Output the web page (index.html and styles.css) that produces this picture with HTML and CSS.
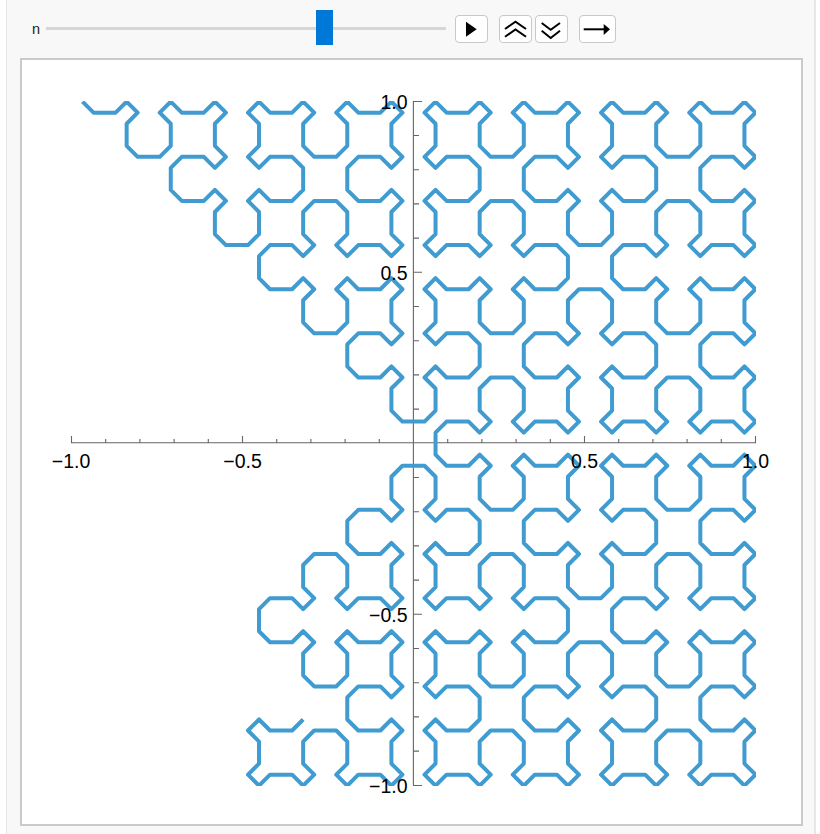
FILE: index.html
```html
<!DOCTYPE html>
<html lang="en">
<head>
<meta charset="utf-8">
<title>Space-filling curve</title>
<link rel="stylesheet" href="styles.css">
</head>
<body>
<div class="panel">
  <div class="toolbar">
    <span class="label">n</span>
    <div class="slider"><div class="track"></div><div class="thumb"></div></div>
    <div class="btn play"><svg width="33" height="28" viewBox="0 0 33 28"><path class="solid" d="M11 6.7V21.7L21.7 14.2Z"/></svg></div>
    <div class="btn step"><svg width="33" height="28" viewBox="0 0 33 28"><path class="line" d="M6 14L16.5 6.6L27 14M6 21.8L16.5 14.4L27 21.8"/></svg></div>
    <div class="btn step-down"><svg width="33" height="28" viewBox="0 0 33 28"><path class="line" d="M6.7 8L15.7 14.8L25 8M6.7 15.7L15.7 23L25 15.7"/></svg></div>
    <div class="btn wide"><svg width="37" height="28" viewBox="0 0 37 28"><path class="line" d="M4.7 14.3H26"/><path class="solid" d="M24.7 9L31 14.3L24.7 20Z"/></svg></div>
  </div>
  <div class="plot">
    <svg class="chart" viewBox="22 60 779 764" width="779" height="764">
      <defs><clipPath id="range"><rect x="71" y="101" width="685" height="685"/></clipPath></defs>
      <path class="axis" d="M71 442.8H756M413.4 101V785.5"/>
      <path class="axis" d="M71.5 443V436M105.7 443V439M139.9 443V439M174.1 443V439M208.3 443V439M242.5 443V436M276.7 443V439M310.9 443V439M345.1 443V439M379.3 443V439M447.7 443V439M481.9 443V439M516.1 443V439M550.3 443V439M584.5 443V436M618.7 443V439M652.9 443V439M687.1 443V439M721.3 443V439M755.5 443V436"/>
      <path class="axis" d="M413 101.5H422M413 135.5H419M413 169.7H419M413 203.9H419M413 238.1H419M413 272.3H422M413 306.5H419M413 340.7H419M413 374.9H419M413 409.1H419M413 477.5H419M413 511.7H419M413 545.9H419M413 580.1H419M413 614.3H422M413 648.5H419M413 682.7H419M413 716.9H419M413 751.1H419M413 785.5H422"/>
      <g clip-path="url(#range)"><path id="curve" class="curve"/></g>
      <text class="tick mid" x="71" y="467.5">−1.0</text>
      <text class="tick mid" x="242.5" y="467.5">−0.5</text>
      <text class="tick mid" x="584.5" y="467.5">0.5</text>
      <text class="tick mid" x="755.5" y="467.5">1.0</text>
      <text class="tick end" x="407.5" y="108.5">1.0</text>
      <text class="tick end" x="407.5" y="280">0.5</text>
      <text class="tick end" x="407.5" y="621.7">−0.5</text>
      <text class="tick end" x="407.5" y="792.7">−1.0</text>
    </svg>
  </div>
</div>
<script src="script.js"></script>
</body>
</html>
```
FILE: styles.css
```css
html, body {
  margin: 0;
  padding: 0;
  background: #fff;
}
.panel {
  box-sizing: border-box;
  width: 810px;
  height: 834px;
  margin-left: 6px;
  background: #f8f8f8;
  border-left: 1px solid #e6e6e6;
  border-right: 2px solid #e6e6e6;
  overflow: hidden;
}
.toolbar {
  display: flex;
  align-items: center;
  height: 58px;
  padding-left: 25px;
}
.label {
  width: 14px;
  font: 14.5px "Liberation Sans", Arial, sans-serif;
  color: #222;
}
.slider {
  position: relative;
  display: flex;
  align-items: center;
  width: 400px;
  height: 35px;
  margin-bottom: 3px;
}
.track {
  width: 100%;
  height: 3px;
  margin-top: 2px;
  background: #d6d6d6;
}
.thumb {
  position: absolute;
  left: 270px;
  top: 0;
  width: 17px;
  height: 35px;
  background: #0078d7;
}
.btn {
  box-sizing: border-box;
  width: 33px;
  height: 28px;
  background: #fff;
  border: 1px solid #c8c8c8;
  border-radius: 4px;
}
.btn svg {
  display: block;
  margin: -1px;
}
.play { margin-left: 9px; }
.step { margin-left: 11px; }
.step-down { margin-left: 3px; }
.wide { width: 37px; margin-left: 11px; }
.solid { fill: #000; }
.line {
  fill: none;
  stroke: #000;
  stroke-width: 2;
}
.plot {
  box-sizing: border-box;
  width: 783px;
  height: 768px;
  margin-left: 13px;
  background: #fff;
  border: 2px solid #cacaca;
}
.chart { display: block; }
.axis {
  fill: none;
  stroke: #666;
  stroke-width: 1.1;
}
.curve {
  fill: none;
  stroke: #3f9bd0;
  stroke-width: 4;
  stroke-linejoin: round;
}
.tick {
  font: 19.5px "Liberation Sans", Arial, sans-serif;
  fill: #000;
}
.mid { text-anchor: middle; }
.end { text-anchor: end; }
```
FILE: script.js
```js
// Lattice walk of the curve: one letter per edge, Right/Down/Left/Up.
var X = "RDRURDLDRDRURULU";
var Y = "RDRURDLDRDLULDLD";
var Z = "RDRURDLDRDLULDLURULUL";
var walk = "D" + X + Y + X + "RDRU" + "RULULDLURULU" + X + Y + Z + "DLDRDLULDLD" +
  X + Y + Z + "DLDRDLULDL" +
  "URULURDRURULULDLURULUL" + "DLDRDLULDLD" + "RDRURDLDRDLULDLURU";
var HEAD = { R: [1, 0], D: [0, 1], L: [-1, 0], U: [0, -1] };
var UNIT = 44.13, X0 = 82.5, Y0 = 112.7, Q = 0.25;
var col = 0, row = -1, pts = [];

function at(c, r) {
  return (X0 + c * UNIT).toFixed(2) + " " + (Y0 + r * UNIT).toFixed(2);
}
for (var i = 0; i + 1 < walk.length; i++) {
  var h = HEAD[walk[i]], o = HEAD[walk[i + 1]];
  col += h[0];
  row += h[1];
  pts.push(at(col - h[0] * Q, row - h[1] * Q));
  if (o[0] === -h[1] && o[1] === h[0]) {
    pts.push(at(col - o[0] * Q, row - o[1] * Q));
    pts.push(at(col + h[0] * Q, row + h[1] * Q));
  }
  pts.push(at(col + o[0] * Q, row + o[1] * Q));
}
document.getElementById("curve").setAttribute("d", "M" + pts.join("L"));
```
